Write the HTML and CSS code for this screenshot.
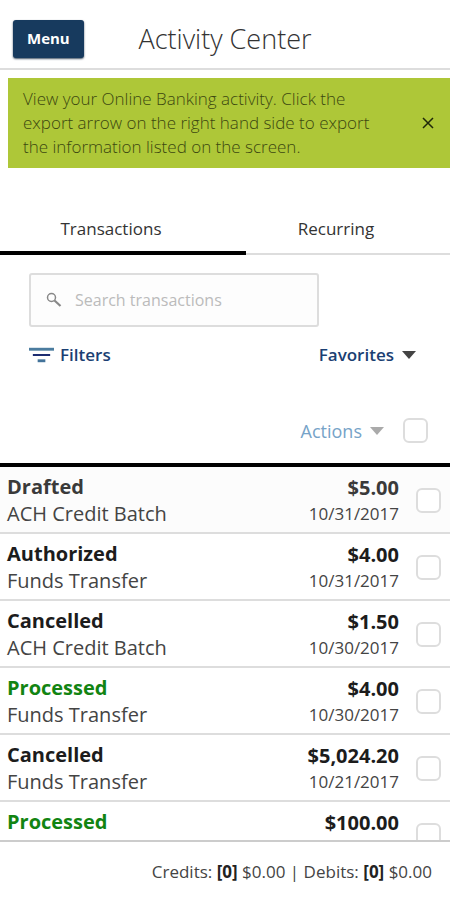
FILE: index.html
```html
<!DOCTYPE html>
<html lang="en">
<head>
<meta charset="utf-8">
<meta name="viewport" content="width=device-width, initial-scale=1">
<title>Activity Center</title>
<link rel="stylesheet" href="styles.css">
</head>
<body>
<div class="app">
  <header class="header">
    <button class="menu" type="button">Menu</button>
    <h1 class="title">Activity Center</h1>
  </header>

  <section class="notice">
    <p class="notice-text">View your Online Banking activity. Click the export arrow on the right hand side to export the information listed on the screen.</p>
    <button class="close" type="button" aria-label="Close">
      <svg width="12" height="12" viewBox="0 0 12 12"><path d="M1 1L11 11M11 1L1 11" stroke="#20280a" stroke-width="1.5" fill="none"/></svg>
    </button>
  </section>

  <nav class="tabs">
    <a class="tab tab-active" href="#transactions">Transactions</a>
    <a class="tab" href="#recurring">Recurring</a>
  </nav>

  <section class="tools">
    <label class="search">
      <svg width="16" height="16" viewBox="0 0 16 16" fill="none" stroke="#888"><circle cx="5.5" cy="5.5" r="4" stroke-width="1.5"/><path d="M8.5 8.5L14.5 14" stroke-width="2.2"/></svg>
      <input class="search-input" type="search" placeholder="Search transactions" aria-label="Search transactions">
    </label>
    <div class="links">
      <button class="link" type="button">
        <svg width="25" height="16" viewBox="0 0 26 16"><path d="M0 2H26" stroke="#4b7c9f" stroke-width="3"/><path d="M4 8H22" stroke="#14246c" stroke-width="2"/><path d="M9 14H17" stroke="#43739a" stroke-width="3"/></svg>
        Filters
      </button>
      <button class="link" type="button">
        Favorites
        <svg class="caret" width="14" height="8" viewBox="0 0 14 8"><path d="M0 0H14L7 8Z" fill="#444"/></svg>
      </button>
    </div>
  </section>

  <div class="bulk">
    <button class="link link-muted" type="button">
      Actions
      <svg class="caret" width="14" height="8" viewBox="0 0 14 8"><path d="M0 0H14L7 8Z" fill="#aaa"/></svg>
    </button>
    <input class="check" type="checkbox" aria-label="Select all">
  </div>

  <main class="list">
    <table class="table">
      <tbody>
        <tr class="row row-draft"><td class="info"><strong class="status">Drafted</strong><span class="type">ACH Credit Batch</span></td><td class="money"><strong class="amount">$5.00</strong><span class="date">10/31/2017</span></td><td class="pick"><input class="check" type="checkbox" aria-label="Select Drafted $5.00"></td></tr>
        <tr class="row"><td class="info"><strong class="status">Authorized</strong><span class="type">Funds Transfer</span></td><td class="money"><strong class="amount">$4.00</strong><span class="date">10/31/2017</span></td><td class="pick"><input class="check" type="checkbox" aria-label="Select Authorized $4.00"></td></tr>
        <tr class="row"><td class="info"><strong class="status">Cancelled</strong><span class="type">ACH Credit Batch</span></td><td class="money"><strong class="amount">$1.50</strong><span class="date">10/30/2017</span></td><td class="pick"><input class="check" type="checkbox" aria-label="Select Cancelled $1.50"></td></tr>
        <tr class="row"><td class="info"><strong class="status status-done">Processed</strong><span class="type">Funds Transfer</span></td><td class="money"><strong class="amount">$4.00</strong><span class="date">10/30/2017</span></td><td class="pick"><input class="check" type="checkbox" aria-label="Select Processed $4.00"></td></tr>
        <tr class="row"><td class="info"><strong class="status">Cancelled</strong><span class="type">Funds Transfer</span></td><td class="money"><strong class="amount">$5,024.20</strong><span class="date">10/21/2017</span></td><td class="pick"><input class="check" type="checkbox" aria-label="Select Cancelled $5,024.20"></td></tr>
        <tr class="row"><td class="info"><strong class="status status-done">Processed</strong></td><td class="money"><strong class="amount">$100.00</strong></td><td class="pick"><input class="check" type="checkbox" aria-label="Select Processed $100.00"></td></tr>
      </tbody>
    </table>
  </main>

  <footer class="footer">
    <p class="totals">Credits: <strong>[0]</strong> $0.00 | Debits: <strong>[0]</strong> $0.00</p>
  </footer>
</div>
</body>
</html>
```
FILE: styles.css
```css
* {
  box-sizing: border-box;
}

body {
  margin: 0;
  background: #fff;
  color: #444;
  font-family: "Open Sans", sans-serif;
  font-size: 17px;
}

button {
  padding: 0;
  border: 0;
  background: none;
  font: inherit;
  cursor: pointer;
}

.app {
  display: flex;
  flex-direction: column;
  height: 100vh;
}

.header {
  display: grid;
  grid-template-columns: 1fr auto 1fr;
  align-items: center;
  padding: 19px 13px 9px;
  border-bottom: 2px solid #ddd;
}

.menu {
  justify-self: start;
  height: 38px;
  padding: 0 14px 2px;
  border-radius: 3px;
  background: #173a5e;
  box-shadow: 0 1px 2px #456;
  color: #fff;
  font-size: 15px;
  font-weight: 700;
}

.title {
  margin: 0;
  color: #333;
  font-size: 27px;
  font-weight: 300;
  line-height: 40px;
}

.notice {
  display: flex;
  align-items: center;
  justify-content: space-between;
  margin: 8px 0 0 8px;
  padding: 9px 16px 9px 15px;
  background: #aec738;
}

.notice-text {
  max-width: 372px;
  margin: 0;
  color: #3c4710;
  font-weight: 300;
  line-height: 24px;
}

.close {
  display: flex;
}

.tabs {
  display: flex;
  margin-top: 38px;
}

.tab {
  flex: 180;
  padding: 13px 24px 14px 0;
  border-bottom: 2px solid #ddd;
  color: #333;
  line-height: 20px;
  text-align: center;
  text-decoration: none;
}

.tab-active {
  flex: 222;
  padding-bottom: 12px;
  border-bottom: 4px solid #000;
}

.tools {
  padding: 18px 34px 0 29px;
}

.search {
  display: flex;
  align-items: center;
  gap: 13px;
  width: 75%;
  height: 54px;
  padding: 0 15px;
  border: 2px solid #ddd;
  border-radius: 3px;
  background: #fdfdfd;
}

.search svg {
  flex: none;
}

.search-input {
  flex: 1;
  min-width: 0;
  padding: 0;
  border: 0;
  outline: 0;
  background: none;
  font: inherit;
  font-size: 16px;
}

.search-input::placeholder {
  color: #bbb;
}

.links {
  display: flex;
  justify-content: space-between;
  margin-top: 16px;
}

.link {
  display: flex;
  align-items: center;
  gap: 6px;
  color: #1b3f73;
  font-weight: 600;
  line-height: 24px;
}

.caret {
  margin-left: 2px;
}

.link-muted {
  color: #76a3c8;
  font-size: 18px;
  font-weight: 400;
}

.bulk {
  display: flex;
  align-items: center;
  justify-content: flex-end;
  gap: 19px;
  margin-top: 51px;
  padding: 0 22px 20px 0;
}

.check {
  appearance: none;
  display: block;
  width: 25px;
  height: 25px;
  margin: 0;
  border: 2px solid #ddd;
  border-radius: 6px;
  background: #fff;
}

.list {
  flex: 1;
  min-height: 0;
  overflow: hidden;
  border-top: 4px solid #000;
}

.table {
  width: 100%;
  border-collapse: separate;
  border-spacing: 0;
}

.table td {
  height: 67px;
  padding: 6px 0 0;
  border-bottom: 2px solid #ddd;
  vertical-align: top;
}

.row-draft {
  background: #fcfcfc;
}

.table .info {
  padding-left: 7px;
}

.table .money {
  padding-top: 7px;
  text-align: right;
}

.table .pick {
  width: 51px;
  padding: 21px 0 0 17px;
}

.status,
.amount,
.type {
  display: block;
  font-size: 20px;
  line-height: 27px;
}

.status,
.amount {
  color: #1c1c1c;
}

.row-draft .status,
.row-draft .amount {
  color: #3a3a3a;
}

.table .status-done {
  color: #128412;
}

.date {
  display: block;
  line-height: 26px;
}

.footer {
  padding: 18px 18px 16px;
  border-top: 2px solid #ccc;
  text-align: right;
}

.totals {
  margin: 0;
  line-height: 24px;
}

.totals strong {
  color: #222;
}
```
